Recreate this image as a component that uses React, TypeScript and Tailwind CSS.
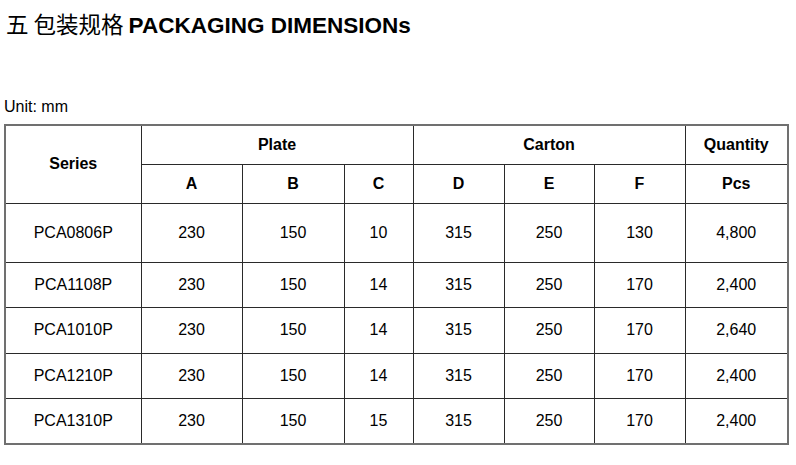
const rows = [
  ["PCA0806P", "230", "150", "10", "315", "250", "130", "4,800"],
  ["PCA1108P", "230", "150", "14", "315", "250", "170", "2,400"],
  ["PCA1010P", "230", "150", "14", "315", "250", "170", "2,640"],
  ["PCA1210P", "230", "150", "14", "315", "250", "170", "2,400"],
  ["PCA1310P", "230", "150", "15", "315", "250", "170", "2,400"],
];

const widths = [136, 101, 102, 69, 91, 90, 91, 103];

const App = () => {
  return (
    <div className="w-[796px] h-[465px] bg-white text-black font-['Liberation_Sans',Arial,sans-serif] overflow-hidden">
      <h1 className="pl-[6px] pt-[10px] h-[26px] leading-[26px] text-[22.5px] whitespace-nowrap">
        <span className="font-normal font-['Noto_Sans_CJK_SC',sans-serif]">五 包装规格 </span>
        <span className="font-bold">PACKAGING DIMENSIONs</span>
      </h1>
      <p className="pl-[4px] mt-[71px] text-[16px] leading-[20px]">Unit: mm</p>
      <table className="ml-[4px] mt-[7px] border-collapse table-fixed border-2 border-[#707070] text-[16px] text-center">
        <colgroup>
          {widths.map((w, i) => (
            <col key={i} style={{ width: w }} />
          ))}
        </colgroup>
        <thead className="font-bold">
          <tr className="h-[39px]">
            <th rowSpan={2} className="border border-[#2a2a2a]">Series</th>
            <th colSpan={3} className="border border-[#2a2a2a]">Plate</th>
            <th colSpan={3} className="border border-[#2a2a2a]">Carton</th>
            <th className="border border-[#2a2a2a]">Quantity</th>
          </tr>
          <tr className="h-[39px]">
            {["A", "B", "C", "D", "E", "F", "Pcs"].map((h) => (
              <th key={h} className="border border-[#2a2a2a]">{h}</th>
            ))}
          </tr>
        </thead>
        <tbody>
          {rows.map((r, i) => (
            <tr key={i} className={i === 0 ? "h-[59px]" : "h-[45.5px]"}>
              {r.map((c, j) => (
                <td key={j} className="border border-[#2a2a2a] p-0">{c}</td>
              ))}
            </tr>
          ))}
        </tbody>
      </table>
    </div>
  );
};

export default App;
